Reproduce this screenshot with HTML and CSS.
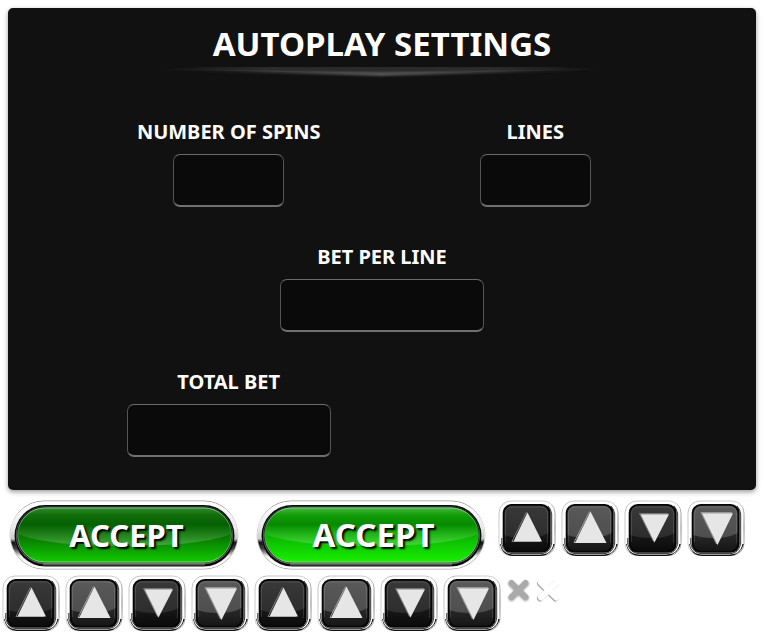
FILE: index.html
```html
<!DOCTYPE html>
<html lang="en">
<head>
<meta charset="utf-8">
<meta name="viewport" content="width=device-width, initial-scale=1">
<title>Autoplay settings</title>
<link rel="stylesheet" href="styles.css">
</head>
<body>
<svg class="defs" aria-hidden="true">
  <defs>
    <linearGradient id="chrome" x1="0" y1="0" x2="0" y2="1">
      <stop offset="0" stop-color="#fff"/><stop offset=".4" stop-color="#e8e8e8"/><stop offset=".56" stop-color="#ccc"/><stop offset=".62" stop-color="#111"/><stop offset=".72" stop-color="#444"/><stop offset=".84" stop-color="#eee"/><stop offset="1" stop-color="#fff"/>
    </linearGradient>
    <linearGradient id="rim" x1="0" y1="0" x2="0" y2="1">
      <stop offset="0" stop-color="#999"/><stop offset=".3" stop-color="#ddd"/><stop offset=".8" stop-color="#bbb"/><stop offset="1" stop-color="#aaa"/>
    </linearGradient>
    <linearGradient id="green" x1="0" y1="0" x2="0" y2="1">
      <stop offset="0" stop-color="#2f8a2c"/><stop offset=".14" stop-color="#116f0a"/><stop offset=".3" stop-color="#066002"/><stop offset=".55" stop-color="#087a02"/><stop offset="1" stop-color="#13cb00"/>
    </linearGradient>
    <linearGradient id="green-lit" x1="0" y1="0" x2="0" y2="1">
      <stop offset="0" stop-color="#48b843"/><stop offset=".14" stop-color="#129d08"/><stop offset=".3" stop-color="#078a00"/><stop offset=".6" stop-color="#0cc000"/><stop offset="1" stop-color="#19f000"/>
    </linearGradient>
    <linearGradient id="gloss" x1="0" y1="0" x2="0" y2="1">
      <stop offset=".45" stop-color="#fff" stop-opacity="0"/><stop offset="1" stop-color="#fff" stop-opacity=".22"/>
    </linearGradient>
    <linearGradient id="edge" x1="0" y1="0" x2="0" y2="1">
      <stop offset="0" stop-color="#94c692"/><stop offset=".4" stop-color="#3c8c38"/><stop offset="1" stop-color="#86d880"/>
    </linearGradient>
    <linearGradient id="dark" x1="0" y1="0" x2="0" y2="1">
      <stop offset="0" stop-color="#2c2c2c"/><stop offset=".55" stop-color="#1b1b1b"/><stop offset="1" stop-color="#0b0b0b"/>
    </linearGradient>
    <linearGradient id="dark-lit" x1="0" y1="0" x2="0" y2="1">
      <stop offset="0" stop-color="#444"/><stop offset=".6" stop-color="#2a2a2a"/><stop offset="1" stop-color="#161616"/>
    </linearGradient>
    <linearGradient id="sheen" x1="0" y1="0" x2="0" y2="1">
      <stop offset="0" stop-color="#fff" stop-opacity=".06"/><stop offset="1" stop-color="#fff" stop-opacity=".1"/>
    </linearGradient>
    <linearGradient id="key-rim" x1="0" y1="0" x2="1" y2="1">
      <stop offset="0" stop-color="#bbb"/><stop offset=".45" stop-color="#ccc"/><stop offset=".75" stop-color="#777"/><stop offset="1" stop-color="#bbb"/>
    </linearGradient>
    <linearGradient id="fade" x1="0" y1="0" x2="1" y2="0">
      <stop offset="0" stop-color="#666" stop-opacity="0"/><stop offset=".25" stop-color="#666" stop-opacity=".6"/><stop offset=".5" stop-color="#666"/><stop offset=".75" stop-color="#666" stop-opacity=".6"/><stop offset="1" stop-color="#666" stop-opacity="0"/>
    </linearGradient>
    <linearGradient id="fade-dim" x1="0" y1="0" x2="1" y2="0">
      <stop offset="0" stop-color="#444" stop-opacity="0"/><stop offset=".25" stop-color="#444" stop-opacity=".5"/><stop offset=".75" stop-color="#444" stop-opacity=".5"/><stop offset="1" stop-color="#444" stop-opacity="0"/>
    </linearGradient>
    <filter id="soft" x="-10%" y="-50%" width="120%" height="200%"><feGaussianBlur stdDeviation=".8"/></filter>

    <symbol id="pill" viewBox="0 0 230 70">
      <rect x="1" y="1" width="228" height="68" rx="34" fill="#fff" stroke="url(#rim)"/>
      <rect x="3.500" y="3.500" width="223" height="63" rx="31.500" fill="none" stroke="url(#chrome)" stroke-width="4"/>
      <rect x="5.500" y="5" width="220" height="61.500" rx="30.700" fill="#0b0b0b"/>
      <path d="M34 64.800H196" stroke="#aaa" stroke-width=".7"/>
      <rect x="7" y="6.500" width="217" height="57.500" rx="28.700" fill="#777"/>
      <rect x="7.500" y="6.500" width="216" height="56.500" rx="28" fill="#122"/>
    </symbol>
    <symbol id="pill-gloss" viewBox="0 0 230 70">
      <path d="M9 34C9 18 21 8 37 8H194C210 8 222 18 222 34C206 41 168 46 115 46S25 41 9 34Z" fill="url(#gloss)"/>
      <rect x="8.800" y="8" width="213.500" height="54" rx="27" fill="none" stroke="url(#edge)" stroke-width=".9"/>
    </symbol>
    <symbol id="key" viewBox="0 0 58 57">
      <rect x="1" y="1" width="56" height="54.500" rx="12" fill="#fff" stroke="url(#key-rim)" stroke-width=".9"/>
      <path d="M2.800 44Q5 54.700 15 55.300H43Q53 54 56 44" fill="none" stroke="#111" stroke-width="1.600"/>
      <rect x="2.800" y="2.500" width="52.500" height="51.700" rx="11" fill="#fff"/>
      <path d="M3.800 38V44Q6 52.900 14 53.600H44Q52.500 52.500 53.700 43V14Q53 9 50 6" fill="none" stroke="#333" stroke-width="1"/>
      <rect x="4.700" y="4" width="48" height="48.800" rx="9" fill="#060606"/>
    </symbol>
    <symbol id="key-gloss" viewBox="0 0 58 57">
      <path d="M6.500 14Q6.500 6 14 6H43Q50.500 6 50.500 14V33Q42 38 28 38T6.500 35Z" fill="url(#sheen)"/>
      <path d="M7.500 42V14Q7.500 7 14 7H43Q49.500 7 49.500 14V43" fill="none" stroke="#fff" stroke-opacity=".12"/>
    </symbol>
    <symbol id="key-dark" viewBox="0 0 58 57">
      <use href="#key"/><rect x="6.500" y="5.800" width="44" height="45" rx="8" fill="url(#dark)"/><use href="#key-gloss"/>
    </symbol>
    <symbol id="key-bright" viewBox="0 0 58 57">
      <use href="#key"/><rect x="6.500" y="5.800" width="44" height="45" rx="8" fill="url(#dark-lit)"/><use href="#key-gloss"/><path d="M6.500 14Q6.500 6 14 6H43Q50.500 6 50.500 14V33Q42 38 28 38T6.500 35Z" fill="url(#sheen)"/>
    </symbol>
    <symbol id="up" viewBox="0 0 58 57">
      <use href="#key-dark"/><path d="M28.500 12L14 41.500H42" fill="none" stroke="#777"/><path d="M29.500 12.500L44 41.500H15.500Z" fill="#e6e6e6"/>
    </symbol>
    <symbol id="up-lit" viewBox="0 0 58 57">
      <use href="#key-bright"/><path d="M28.500 11.500L13 42.500H42" fill="none" stroke="#999"/><path d="M29.500 11.500L45.500 43H14Z" fill="#e6e6e6"/>
    </symbol>
    <symbol id="down" viewBox="0 0 58 57">
      <use href="#key-dark"/><path d="M44 13.500H15.500L29.500 41.500" fill="none" stroke="#777"/><path d="M16.500 14.200H45L30.500 42.500Z" fill="#e6e6e6"/>
    </symbol>
    <symbol id="down-lit" viewBox="0 0 58 57">
      <use href="#key-bright"/><path d="M45 12.500H14L29.500 44" fill="none" stroke="#999"/><path d="M15 13.300H46L30.500 45Z" fill="#e6e6e6"/>
    </symbol>
  </defs>
</svg>

<main class="panel">
  <h1 class="title">AUTOPLAY SETTINGS</h1>
  <svg class="rule" viewBox="0 0 460 12" preserveAspectRatio="none" aria-hidden="true">
    <path d="M0 2.500L60 0H400L460 2.500L230 7Z" fill="url(#fade-dim)"/>
    <path d="M0 2.500L230 5.500L460 2.500L230 9Z" fill="url(#fade)" filter="url(#soft)" opacity=".85"/>
  </svg>
  <form class="fields">
    <div class="field"><label for="spins">NUMBER OF SPINS</label><input id="spins" class="box" type="text"></div>
    <div class="field"><label for="lines">LINES</label><input id="lines" class="box" type="text"></div>
    <div class="field full"><label for="bet">BET PER LINE</label><input id="bet" class="box wide" type="text"></div>
    <div class="field"><label for="total">TOTAL BET</label><input id="total" class="box wide" type="text"></div>
  </form>
</main>

<div class="row row-accept">
  <button class="accept" type="button"><svg viewBox="0 0 230 70" aria-hidden="true"><use href="#pill"/><rect x="8.500" y="7.500" width="214" height="55" rx="27.500" fill="url(#green)"/><use href="#pill-gloss"/></svg><span>ACCEPT</span></button>
  <button class="accept lit" type="button"><svg viewBox="0 0 230 70" aria-hidden="true"><use href="#pill"/><rect x="8.500" y="7.500" width="214" height="55" rx="27.500" fill="url(#green-lit)"/><use href="#pill-gloss"/></svg><span>ACCEPT</span></button>
  <div class="keys">
    <button class="key" type="button" aria-label="More spins"><svg viewBox="0 0 58 57"><use href="#up"/></svg></button>
    <button class="key" type="button" aria-label="More spins"><svg viewBox="0 0 58 57"><use href="#up-lit"/></svg></button>
    <button class="key" type="button" aria-label="Fewer spins"><svg viewBox="0 0 58 57"><use href="#down"/></svg></button>
    <button class="key" type="button" aria-label="Fewer spins"><svg viewBox="0 0 58 57"><use href="#down-lit"/></svg></button>
  </div>
</div>
<div class="row row-keys">
  <div class="keys">
    <button class="key" type="button" aria-label="More lines"><svg viewBox="0 0 58 57"><use href="#up"/></svg></button>
    <button class="key" type="button" aria-label="More lines"><svg viewBox="0 0 58 57"><use href="#up-lit"/></svg></button>
    <button class="key" type="button" aria-label="Fewer lines"><svg viewBox="0 0 58 57"><use href="#down"/></svg></button>
    <button class="key" type="button" aria-label="Fewer lines"><svg viewBox="0 0 58 57"><use href="#down-lit"/></svg></button>
    <button class="key" type="button" aria-label="Raise bet"><svg viewBox="0 0 58 57"><use href="#up"/></svg></button>
    <button class="key" type="button" aria-label="Raise bet"><svg viewBox="0 0 58 57"><use href="#up-lit"/></svg></button>
    <button class="key" type="button" aria-label="Lower bet"><svg viewBox="0 0 58 57"><use href="#down"/></svg></button>
    <button class="key" type="button" aria-label="Lower bet"><svg viewBox="0 0 58 57"><use href="#down-lit"/></svg></button>
  </div>
  <button class="close" type="button" aria-label="Close"><svg viewBox="0 0 28 28"><path d="M6.500 7L20.500 21M20.500 7L6.500 21" stroke="#aaa" stroke-width="6" stroke-linecap="round"/></svg></button>
  <button class="close pale" type="button" aria-label="Close"><svg viewBox="0 0 28 28"><path d="M6 6.500L21.500 21.500M21.500 6.500L6 21.500" stroke="#fff" stroke-width="6" stroke-linecap="round"/></svg></button>
</div>
</body>
</html>
```
FILE: styles.css
```css
* {
  box-sizing: border-box;
}

body {
  margin: 0;
  padding: 8px 0 0;
  background: #fff;
  color: #fff;
  font-family: "Noto Sans", "Open Sans", sans-serif;
  font-weight: 700;
}

.defs {
  position: absolute;
  width: 0;
  height: 0;
}

.panel {
  margin: 0 8px;
  padding: 13px 0 33px;
  display: flex;
  flex-direction: column;
  align-items: center;
  background: #111;
  border-radius: 5px;
  box-shadow: 0 2px 5px rgba(0, 0, 0, .4);
}

.title {
  margin: 0;
  font-size: 33px;
  line-height: 46px;
}

.rule {
  width: 62%;
  height: 12px;
}

.fields {
  width: 100%;
  margin-top: 40px;
  padding: 0 9%;
  display: grid;
  grid-template-columns: 1fr 1fr;
  row-gap: 37px;
}

.field {
  display: flex;
  flex-direction: column;
  align-items: center;
  gap: 9px;
  font-size: 20px;
  line-height: 26px;
}

.full {
  grid-column: 1 / -1;
}

.box {
  width: 111px;
  height: 53px;
  padding: 0 12px;
  border: 1px solid #555;
  border-top-color: #6a6a6a;
  border-bottom: 2px solid #707070;
  border-radius: 7px;
  background: #0a0a0a;
  color: #fff;
  font: inherit;
  text-align: center;
}

.wide {
  width: 204px;
}

button {
  padding: 0;
  border: 0;
  background: none;
  color: inherit;
  font: inherit;
}

button svg {
  display: block;
  width: 100%;
  height: 100%;
}

.row {
  display: flex;
  align-items: flex-start;
}

.row-accept {
  margin-top: 10px;
  padding-left: 9px;
}

.accept {
  display: grid;
  place-items: center;
  width: 230px;
  height: 70px;
  margin-right: 17px;
  font-size: 31px;
  line-height: 40px;
}

.accept > * {
  grid-area: 1 / 1;
}

.accept span {
  z-index: 1;
  padding-left: 5px;
  text-shadow: 2px 2px 2px #000;
}

.lit {
  margin-right: 12px;
  font-size: 33px;
}

.keys {
  display: flex;
  gap: 5px;
}

.key {
  width: 58px;
  height: 57px;
}

.row-keys {
  margin-top: 5px;
  padding-left: 2px;
}

.close {
  width: 28px;
  height: 28px;
  margin: 1px 0 0 4px;
}

.close path {
  filter: drop-shadow(0 1px 1px #999);
}

.pale {
  margin-left: 2px;
}

.pale path {
  filter: drop-shadow(-1px 1px 0 #aaa);
}
```
